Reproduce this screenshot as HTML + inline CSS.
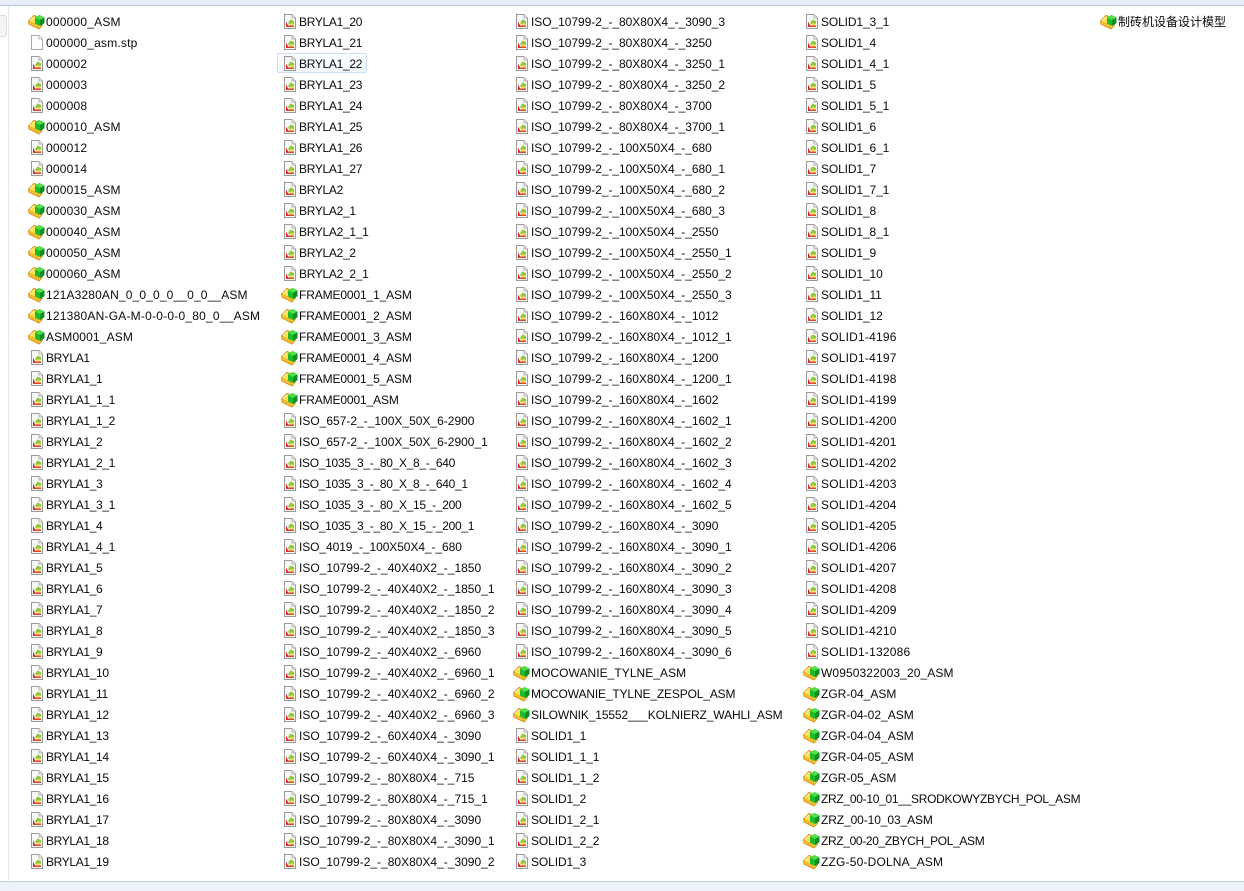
<!DOCTYPE html>
<html lang="zh"><head><meta charset="utf-8"><title>Files</title>
<style>
html,body{margin:0;padding:0}
body{width:1244px;height:891px;overflow:hidden;background:#fff;position:relative;font:12px/21px "Liberation Sans","Noto Sans CJK SC",sans-serif;color:#0a0a0a}
#top{position:absolute;left:0;top:0;width:1244px;height:5px;background:#e9eff8;border-bottom:1px solid #b8c5d8}
#bot{position:absolute;left:0;top:881px;width:1244px;height:10px;background:#eef3fb;border-top:1px solid #c3d0e2;box-sizing:border-box}
#vl{position:absolute;left:8px;top:6px;width:1px;height:875px;background:#dfe8f3}
#tab{position:absolute;left:0;top:15px;width:7px;height:22px;background:#f3f3f3;border:1px solid #dcdcdc;border-left:0;border-radius:0 3px 3px 0;box-sizing:border-box}
#sel{position:absolute;left:277px;top:53px;width:90px;height:20px;border:1px solid #cfe0f5;border-radius:2px;background:linear-gradient(#fbfdff,#f1f7fe);box-sizing:border-box}
.c{position:absolute;top:12px;white-space:nowrap}
.c div{height:21px;position:relative}
.c svg{position:absolute;left:-18px;top:0;width:18px;height:18px}
#c1 div:nth-child(-n+13){letter-spacing:.2px}
#c1 div:nth-child(n+14):nth-child(-n+16){letter-spacing:.15px}
#c1 div:nth-child(n+17){letter-spacing:-.35px}
#c2 div:nth-child(-n+13){letter-spacing:-.3px}
#c2 div:nth-child(n+14):nth-child(-n+19){letter-spacing:-.13px}
#c2 div:nth-child(n+22):nth-child(-n+25){letter-spacing:-.3px}
#c2 div:nth-child(26){letter-spacing:-.08px}
#c3 div:nth-child(-n+31){letter-spacing:-.05px}
#c3 div:nth-child(32){letter-spacing:.05px}
#c3 div:nth-child(33){letter-spacing:-.15px}
#c3 div:nth-child(34){letter-spacing:-.12px}
#c3 div:nth-child(n+35){letter-spacing:-.1px}
#c4 div:nth-child(-n+15){letter-spacing:-.12px}
#c4 div:nth-child(n+16):nth-child(-n+31){letter-spacing:.2px}
#c4 div:nth-child(32){letter-spacing:.1px}
#c4 div:nth-child(38){letter-spacing:-.29px}
#c4 div:nth-child(39){letter-spacing:-.1px}
#c4 div:nth-child(40){letter-spacing:-.35px}
#c4 div:nth-child(41){letter-spacing:.18px}
</style></head><body>
<svg width="0" height="0" style="position:absolute">
<symbol id="f" viewBox="0 0 18 18"><path d="M3.500 2.500h7.500l3.500 3.500v10.500h-11z" fill="#fdfdfd" stroke="#a8a8a8"/><path d="M11 2.500V6h3.500" fill="#eee" stroke="#bbb"/></symbol>
<symbol id="d" viewBox="0 0 18 18"><path d="M3.500 2.500h7.500l3.500 3.500v10.500h-11z" fill="#f8f8f8" stroke="#9a9a9a"/><path d="M11 2.500V6h3.500" fill="#e8e8e8" stroke="#b5b5b5"/><path d="M5 15V9.500L8 15z" fill="#d9262c"/><path d="M5 15h8v-1.500H7z" fill="#e0452a"/><path d="M7 11l2.500-3.500L13 9v2.500l-3 2z" fill="#8fc93a"/><path d="M8 13l2-2 2.500 1v1.500z" fill="#f3e05a"/></symbol>
<symbol id="a" viewBox="0 0 18 18"><path d="M.5 9L6 3.500l4 1.500v6l4.500 2L11 17 1 12z" fill="#fde24f" stroke="#d4921a"/><path d="M1 9.500l9.500 4.500V17" fill="none" stroke="#e6a722"/><path d="M2 12l8 4v-2L2 10z" fill="#f7c02f"/><path d="M2 8.500L6 4.800" stroke="#fff6b0" fill="none"/><path d="M7 5.500L11.500 3 16.500 5.500v5.500L12 14 7 11.500z" fill="#1fba2a"/><path d="M7 5.500l5 2.500 4.500-2.500L11.500 3z" fill="#4fe04a"/><path d="M12 8v6l4.500-3V5.500z" fill="#0c8f24"/></symbol>
</svg>
<div id="top"></div><div id="vl"></div><div id="tab"></div><div id="bot"></div><div id="sel"></div>

<div class="c" id="c1" style="left:46px">
<div><svg><use href="#a"/></svg>000000_ASM</div>
<div><svg><use href="#f"/></svg>000000_asm.stp</div>
<div><svg><use href="#d"/></svg>000002</div>
<div><svg><use href="#d"/></svg>000003</div>
<div><svg><use href="#d"/></svg>000008</div>
<div><svg><use href="#a"/></svg>000010_ASM</div>
<div><svg><use href="#d"/></svg>000012</div>
<div><svg><use href="#d"/></svg>000014</div>
<div><svg><use href="#a"/></svg>000015_ASM</div>
<div><svg><use href="#a"/></svg>000030_ASM</div>
<div><svg><use href="#a"/></svg>000040_ASM</div>
<div><svg><use href="#a"/></svg>000050_ASM</div>
<div><svg><use href="#a"/></svg>000060_ASM</div>
<div><svg><use href="#a"/></svg>121A3280AN_0_0_0_0__0_0__ASM</div>
<div style="letter-spacing:.22px"><svg><use href="#a"/></svg>121380AN-GA-M-0-0-0-0_80_0__ASM</div>
<div><svg><use href="#a"/></svg>ASM0001_ASM</div>
<div><svg><use href="#d"/></svg>BRYLA1</div>
<div><svg><use href="#d"/></svg>BRYLA1_1</div>
<div><svg><use href="#d"/></svg>BRYLA1_1_1</div>
<div><svg><use href="#d"/></svg>BRYLA1_1_2</div>
<div><svg><use href="#d"/></svg>BRYLA1_2</div>
<div><svg><use href="#d"/></svg>BRYLA1_2_1</div>
<div><svg><use href="#d"/></svg>BRYLA1_3</div>
<div><svg><use href="#d"/></svg>BRYLA1_3_1</div>
<div><svg><use href="#d"/></svg>BRYLA1_4</div>
<div><svg><use href="#d"/></svg>BRYLA1_4_1</div>
<div><svg><use href="#d"/></svg>BRYLA1_5</div>
<div><svg><use href="#d"/></svg>BRYLA1_6</div>
<div><svg><use href="#d"/></svg>BRYLA1_7</div>
<div><svg><use href="#d"/></svg>BRYLA1_8</div>
<div><svg><use href="#d"/></svg>BRYLA1_9</div>
<div><svg><use href="#d"/></svg>BRYLA1_10</div>
<div><svg><use href="#d"/></svg>BRYLA1_11</div>
<div><svg><use href="#d"/></svg>BRYLA1_12</div>
<div><svg><use href="#d"/></svg>BRYLA1_13</div>
<div><svg><use href="#d"/></svg>BRYLA1_14</div>
<div><svg><use href="#d"/></svg>BRYLA1_15</div>
<div><svg><use href="#d"/></svg>BRYLA1_16</div>
<div><svg><use href="#d"/></svg>BRYLA1_17</div>
<div><svg><use href="#d"/></svg>BRYLA1_18</div>
<div><svg><use href="#d"/></svg>BRYLA1_19</div>
</div>

<div class="c" id="c2" style="left:299px">
<div><svg><use href="#d"/></svg>BRYLA1_20</div>
<div><svg><use href="#d"/></svg>BRYLA1_21</div>
<div><svg><use href="#d"/></svg>BRYLA1_22</div>
<div><svg><use href="#d"/></svg>BRYLA1_23</div>
<div><svg><use href="#d"/></svg>BRYLA1_24</div>
<div><svg><use href="#d"/></svg>BRYLA1_25</div>
<div><svg><use href="#d"/></svg>BRYLA1_26</div>
<div><svg><use href="#d"/></svg>BRYLA1_27</div>
<div><svg><use href="#d"/></svg>BRYLA2</div>
<div><svg><use href="#d"/></svg>BRYLA2_1</div>
<div><svg><use href="#d"/></svg>BRYLA2_1_1</div>
<div><svg><use href="#d"/></svg>BRYLA2_2</div>
<div><svg><use href="#d"/></svg>BRYLA2_2_1</div>
<div><svg><use href="#a"/></svg>FRAME0001_1_ASM</div>
<div><svg><use href="#a"/></svg>FRAME0001_2_ASM</div>
<div><svg><use href="#a"/></svg>FRAME0001_3_ASM</div>
<div><svg><use href="#a"/></svg>FRAME0001_4_ASM</div>
<div><svg><use href="#a"/></svg>FRAME0001_5_ASM</div>
<div><svg><use href="#a"/></svg>FRAME0001_ASM</div>
<div><svg><use href="#d"/></svg>ISO_657-2_-_100X_50X_6-2900</div>
<div><svg><use href="#d"/></svg>ISO_657-2_-_100X_50X_6-2900_1</div>
<div><svg><use href="#d"/></svg>ISO_1035_3_-_80_X_8_-_640</div>
<div><svg><use href="#d"/></svg>ISO_1035_3_-_80_X_8_-_640_1</div>
<div><svg><use href="#d"/></svg>ISO_1035_3_-_80_X_15_-_200</div>
<div><svg><use href="#d"/></svg>ISO_1035_3_-_80_X_15_-_200_1</div>
<div><svg><use href="#d"/></svg>ISO_4019_-_100X50X4_-_680</div>
<div><svg><use href="#d"/></svg>ISO_10799-2_-_40X40X2_-_1850</div>
<div><svg><use href="#d"/></svg>ISO_10799-2_-_40X40X2_-_1850_1</div>
<div><svg><use href="#d"/></svg>ISO_10799-2_-_40X40X2_-_1850_2</div>
<div><svg><use href="#d"/></svg>ISO_10799-2_-_40X40X2_-_1850_3</div>
<div><svg><use href="#d"/></svg>ISO_10799-2_-_40X40X2_-_6960</div>
<div><svg><use href="#d"/></svg>ISO_10799-2_-_40X40X2_-_6960_1</div>
<div><svg><use href="#d"/></svg>ISO_10799-2_-_40X40X2_-_6960_2</div>
<div><svg><use href="#d"/></svg>ISO_10799-2_-_40X40X2_-_6960_3</div>
<div><svg><use href="#d"/></svg>ISO_10799-2_-_60X40X4_-_3090</div>
<div><svg><use href="#d"/></svg>ISO_10799-2_-_60X40X4_-_3090_1</div>
<div><svg><use href="#d"/></svg>ISO_10799-2_-_80X80X4_-_715</div>
<div><svg><use href="#d"/></svg>ISO_10799-2_-_80X80X4_-_715_1</div>
<div><svg><use href="#d"/></svg>ISO_10799-2_-_80X80X4_-_3090</div>
<div><svg><use href="#d"/></svg>ISO_10799-2_-_80X80X4_-_3090_1</div>
<div><svg><use href="#d"/></svg>ISO_10799-2_-_80X80X4_-_3090_2</div>
</div>

<div class="c" id="c3" style="left:531px">
<div><svg><use href="#d"/></svg>ISO_10799-2_-_80X80X4_-_3090_3</div>
<div><svg><use href="#d"/></svg>ISO_10799-2_-_80X80X4_-_3250</div>
<div><svg><use href="#d"/></svg>ISO_10799-2_-_80X80X4_-_3250_1</div>
<div><svg><use href="#d"/></svg>ISO_10799-2_-_80X80X4_-_3250_2</div>
<div><svg><use href="#d"/></svg>ISO_10799-2_-_80X80X4_-_3700</div>
<div><svg><use href="#d"/></svg>ISO_10799-2_-_80X80X4_-_3700_1</div>
<div><svg><use href="#d"/></svg>ISO_10799-2_-_100X50X4_-_680</div>
<div><svg><use href="#d"/></svg>ISO_10799-2_-_100X50X4_-_680_1</div>
<div><svg><use href="#d"/></svg>ISO_10799-2_-_100X50X4_-_680_2</div>
<div><svg><use href="#d"/></svg>ISO_10799-2_-_100X50X4_-_680_3</div>
<div><svg><use href="#d"/></svg>ISO_10799-2_-_100X50X4_-_2550</div>
<div><svg><use href="#d"/></svg>ISO_10799-2_-_100X50X4_-_2550_1</div>
<div><svg><use href="#d"/></svg>ISO_10799-2_-_100X50X4_-_2550_2</div>
<div><svg><use href="#d"/></svg>ISO_10799-2_-_100X50X4_-_2550_3</div>
<div><svg><use href="#d"/></svg>ISO_10799-2_-_160X80X4_-_1012</div>
<div><svg><use href="#d"/></svg>ISO_10799-2_-_160X80X4_-_1012_1</div>
<div><svg><use href="#d"/></svg>ISO_10799-2_-_160X80X4_-_1200</div>
<div><svg><use href="#d"/></svg>ISO_10799-2_-_160X80X4_-_1200_1</div>
<div><svg><use href="#d"/></svg>ISO_10799-2_-_160X80X4_-_1602</div>
<div><svg><use href="#d"/></svg>ISO_10799-2_-_160X80X4_-_1602_1</div>
<div><svg><use href="#d"/></svg>ISO_10799-2_-_160X80X4_-_1602_2</div>
<div><svg><use href="#d"/></svg>ISO_10799-2_-_160X80X4_-_1602_3</div>
<div><svg><use href="#d"/></svg>ISO_10799-2_-_160X80X4_-_1602_4</div>
<div><svg><use href="#d"/></svg>ISO_10799-2_-_160X80X4_-_1602_5</div>
<div><svg><use href="#d"/></svg>ISO_10799-2_-_160X80X4_-_3090</div>
<div><svg><use href="#d"/></svg>ISO_10799-2_-_160X80X4_-_3090_1</div>
<div><svg><use href="#d"/></svg>ISO_10799-2_-_160X80X4_-_3090_2</div>
<div><svg><use href="#d"/></svg>ISO_10799-2_-_160X80X4_-_3090_3</div>
<div><svg><use href="#d"/></svg>ISO_10799-2_-_160X80X4_-_3090_4</div>
<div><svg><use href="#d"/></svg>ISO_10799-2_-_160X80X4_-_3090_5</div>
<div><svg><use href="#d"/></svg>ISO_10799-2_-_160X80X4_-_3090_6</div>
<div><svg><use href="#a"/></svg>MOCOWANIE_TYLNE_ASM</div>
<div><svg><use href="#a"/></svg>MOCOWANIE_TYLNE_ZESPOL_ASM</div>
<div><svg><use href="#a"/></svg>SILOWNIK_15552___KOLNIERZ_WAHLI_ASM</div>
<div><svg><use href="#d"/></svg>SOLID1_1</div>
<div><svg><use href="#d"/></svg>SOLID1_1_1</div>
<div><svg><use href="#d"/></svg>SOLID1_1_2</div>
<div><svg><use href="#d"/></svg>SOLID1_2</div>
<div><svg><use href="#d"/></svg>SOLID1_2_1</div>
<div><svg><use href="#d"/></svg>SOLID1_2_2</div>
<div><svg><use href="#d"/></svg>SOLID1_3</div>
</div>

<div class="c" id="c4" style="left:821px">
<div><svg><use href="#d"/></svg>SOLID1_3_1</div>
<div><svg><use href="#d"/></svg>SOLID1_4</div>
<div><svg><use href="#d"/></svg>SOLID1_4_1</div>
<div><svg><use href="#d"/></svg>SOLID1_5</div>
<div><svg><use href="#d"/></svg>SOLID1_5_1</div>
<div><svg><use href="#d"/></svg>SOLID1_6</div>
<div><svg><use href="#d"/></svg>SOLID1_6_1</div>
<div><svg><use href="#d"/></svg>SOLID1_7</div>
<div><svg><use href="#d"/></svg>SOLID1_7_1</div>
<div><svg><use href="#d"/></svg>SOLID1_8</div>
<div><svg><use href="#d"/></svg>SOLID1_8_1</div>
<div><svg><use href="#d"/></svg>SOLID1_9</div>
<div><svg><use href="#d"/></svg>SOLID1_10</div>
<div><svg><use href="#d"/></svg>SOLID1_11</div>
<div><svg><use href="#d"/></svg>SOLID1_12</div>
<div><svg><use href="#d"/></svg>SOLID1-4196</div>
<div><svg><use href="#d"/></svg>SOLID1-4197</div>
<div><svg><use href="#d"/></svg>SOLID1-4198</div>
<div><svg><use href="#d"/></svg>SOLID1-4199</div>
<div><svg><use href="#d"/></svg>SOLID1-4200</div>
<div><svg><use href="#d"/></svg>SOLID1-4201</div>
<div><svg><use href="#d"/></svg>SOLID1-4202</div>
<div><svg><use href="#d"/></svg>SOLID1-4203</div>
<div><svg><use href="#d"/></svg>SOLID1-4204</div>
<div><svg><use href="#d"/></svg>SOLID1-4205</div>
<div><svg><use href="#d"/></svg>SOLID1-4206</div>
<div><svg><use href="#d"/></svg>SOLID1-4207</div>
<div><svg><use href="#d"/></svg>SOLID1-4208</div>
<div><svg><use href="#d"/></svg>SOLID1-4209</div>
<div><svg><use href="#d"/></svg>SOLID1-4210</div>
<div><svg><use href="#d"/></svg>SOLID1-132086</div>
<div><svg><use href="#a"/></svg>W0950322003_20_ASM</div>
<div><svg><use href="#a"/></svg>ZGR-04_ASM</div>
<div><svg><use href="#a"/></svg>ZGR-04-02_ASM</div>
<div><svg><use href="#a"/></svg>ZGR-04-04_ASM</div>
<div><svg><use href="#a"/></svg>ZGR-04-05_ASM</div>
<div><svg><use href="#a"/></svg>ZGR-05_ASM</div>
<div><svg><use href="#a"/></svg>ZRZ_00-10_01__SRODKOWYZBYCH_POL_ASM</div>
<div><svg><use href="#a"/></svg>ZRZ_00-10_03_ASM</div>
<div><svg><use href="#a"/></svg>ZRZ_00-20_ZBYCH_POL_ASM</div>
<div><svg><use href="#a"/></svg>ZZG-50-DOLNA_ASM</div>
</div>

<div class="c" style="left:1118px">
<div><svg><use href="#a"/></svg>制砖机设备设计模型</div>
</div>
</body></html>
